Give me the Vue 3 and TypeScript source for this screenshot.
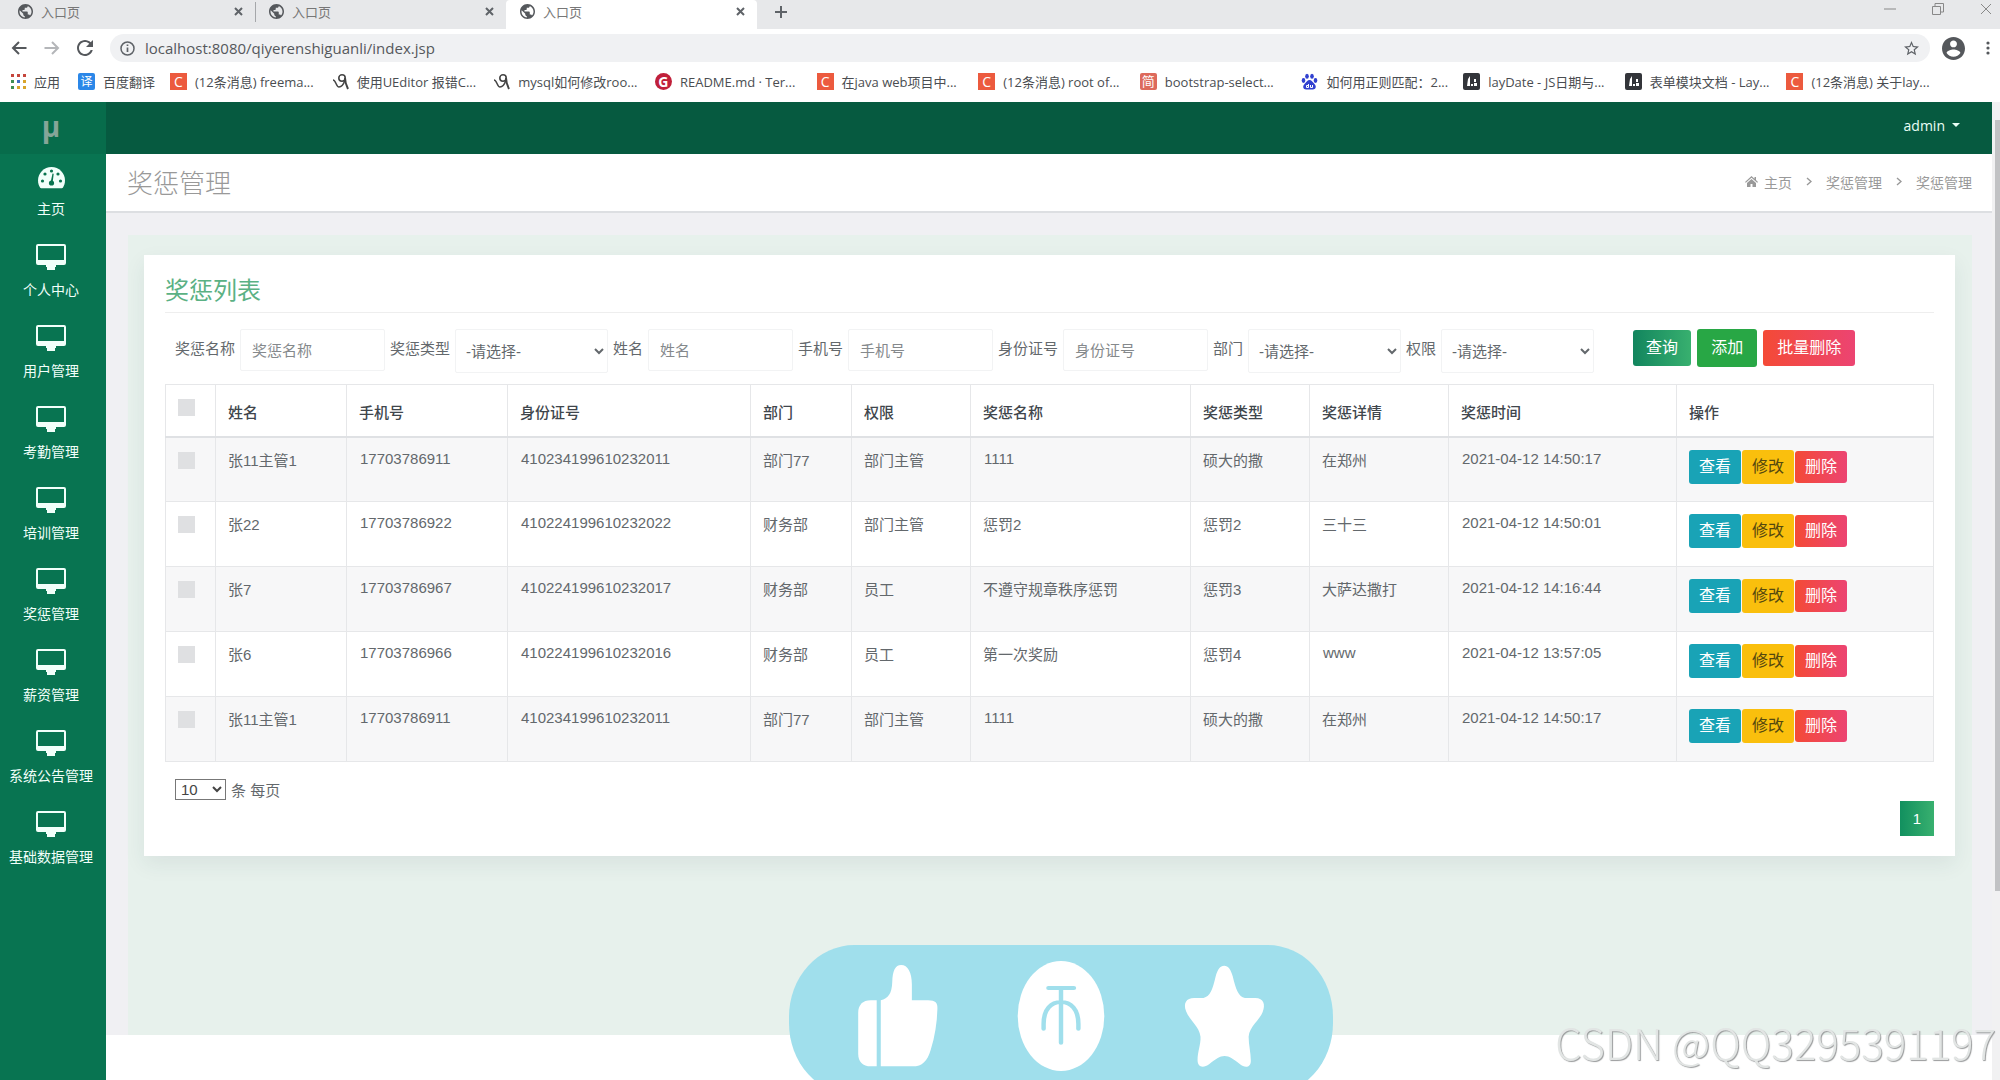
<script setup lang="ts">
import { ref } from 'vue'

interface Bookmark { kind: string; glyph: string; text: string }
interface Row {
  name: string; phone: string; idNo: string; dept: string; role: string
  title: string; type: string; detail: string; time: string
}

const tabs = [{ active: false }, { active: false }, { active: true }]

const bookmarks: Bookmark[] = [
  { kind: 'csdn', glyph: 'C', text: '(12条消息) freema...' },
  { kind: 'pen', glyph: '', text: '使用UEditor 报错C...' },
  { kind: 'pen', glyph: '', text: 'mysql如何修改roo...' },
  { kind: 'gitee', glyph: 'G', text: 'README.md · Ter...' },
  { kind: 'csdn', glyph: 'C', text: '在java web项目中...' },
  { kind: 'csdn', glyph: 'C', text: '(12条消息) root of...' },
  { kind: 'jian', glyph: '简', text: 'bootstrap-select...' },
  { kind: 'paw', glyph: '', text: '如何用正则匹配：2...' },
  { kind: 'lay', glyph: '', text: 'layDate - JS日期与...' },
  { kind: 'lay', glyph: '', text: '表单模块文档 - Lay...' },
  { kind: 'csdn', glyph: 'C', text: '(12条消息) 关于lay...' },
]

const appColors = ['#c5463c', '#c5463c', '#c5463c', '#3f8f52', '#3f6fc4', '#d9a52b', '#3f8f52', '#d9a52b', '#d9a52b']

const menu = ['主页', '个人中心', '用户管理', '考勤管理', '培训管理', '奖惩管理', '薪资管理', '系统公告管理', '基础数据管理']

const columns: { key: keyof Row | 'actions'; label: string; width: number }[] = [
  { key: 'name', label: '姓名', width: 131 },
  { key: 'phone', label: '手机号', width: 161 },
  { key: 'idNo', label: '身份证号', width: 243 },
  { key: 'dept', label: '部门', width: 101 },
  { key: 'role', label: '权限', width: 119 },
  { key: 'title', label: '奖惩名称', width: 220 },
  { key: 'type', label: '奖惩类型', width: 119 },
  { key: 'detail', label: '奖惩详情', width: 139 },
  { key: 'time', label: '奖惩时间', width: 228 },
  { key: 'actions', label: '操作', width: 257 },
]
const fields = columns.map(c => c.key).filter((k): k is keyof Row => k !== 'actions')

// Cells without Chinese characters sit on a slightly higher baseline.
const isLatin = (text: string) => /^[\x20-\x7e]+$/.test(text)

const filters = [
  { id: 'f-title', label: '奖惩名称', select: false },
  { id: 'f-type', label: '奖惩类型', select: true },
  { id: 'f-name', label: '姓名', select: false },
  { id: 'f-phone', label: '手机号', select: false },
  { id: 'f-idno', label: '身份证号', select: false },
  { id: 'f-dept', label: '部门', select: true },
  { id: 'f-role', label: '权限', select: true },
]

const rows: Row[] = [
  { name: '张11主管1', phone: '17703786911', idNo: '410234199610232011', dept: '部门77', role: '部门主管', title: '1111', type: '硕大的撒', detail: '在郑州', time: '2021-04-12 14:50:17' },
  { name: '张22', phone: '17703786922', idNo: '410224199610232022', dept: '财务部', role: '部门主管', title: '惩罚2', type: '惩罚2', detail: '三十三', time: '2021-04-12 14:50:01' },
  { name: '张7', phone: '17703786967', idNo: '410224199610232017', dept: '财务部', role: '员工', title: '不遵守规章秩序惩罚', type: '惩罚3', detail: '大萨达撒打', time: '2021-04-12 14:16:44' },
  { name: '张6', phone: '17703786966', idNo: '410224199610232016', dept: '财务部', role: '员工', title: '第一次奖励', type: '惩罚4', detail: 'www', time: '2021-04-12 13:57:05' },
  { name: '张11主管1', phone: '17703786911', idNo: '410234199610232011', dept: '部门77', role: '部门主管', title: '1111', type: '硕大的撒', detail: '在郑州', time: '2021-04-12 14:50:17' },
]

const url = ref('localhost:8080/qiyerenshiguanli/index.jsp')
const pageSize = ref('10')
</script>

<template>
  <div class="app">
    <header class="browser">
      <div class="tabstrip">
        <div v-for="(tab, i) in tabs" :key="i" class="tab" :class="{ active: tab.active, split: i === 0 }">
          <svg class="globe" viewBox="2 2 20 20" aria-hidden="true"><path d="M12 2C6.48 2 2 6.48 2 12s4.48 10 10 10 10-4.48 10-10S17.52 2 12 2zm-1 17.93c-3.95-.49-7-3.85-7-7.93 0-.62.08-1.21.21-1.79L9 15v1c0 1.1.9 2 2 2v1.93zm6.9-2.54c-.26-.81-1-1.39-1.9-1.39h-1v-3c0-.55-.45-1-1-1H8v-2h2c.55 0 1-.45 1-1V7h2c1.1 0 2-.9 2-2v-.41c2.93 1.19 5 4.06 5 7.41 0 2.08-.8 3.97-2.1 5.39z" /></svg>
          <span class="tab-title">入口页</span>
          <button class="bare" type="button" aria-label="关闭标签页">
            <svg width="9" height="9" viewBox="0 0 9 9"><path d="M1 1l7 7M8 1L1 8" stroke="#5f6368" stroke-width="2" /></svg>
          </button>
        </div>
        <button class="bare new-tab" type="button" aria-label="新标签页">
          <svg width="14" height="14" viewBox="0 0 14 14"><path d="M7 1v12M1 7h12" stroke="#5f6368" stroke-width="2" /></svg>
        </button>
        <div class="window-controls">
          <button class="bare" type="button" aria-label="最小化"><svg width="12" height="12" viewBox="0 0 12 12"><path d="M0 6h12" stroke="#888" /></svg></button>
          <button class="bare" type="button" aria-label="还原"><svg width="12" height="12" viewBox="0 0 12 12" fill="none" stroke="#888"><path d="M.5 3.500h8v8h-8zM3 3V.5h8.500V9H9" /></svg></button>
          <button class="bare" type="button" aria-label="关闭"><svg width="12" height="12" viewBox="0 0 12 12"><path d="M1 1l10 10M11 1L1 11" stroke="#888" /></svg></button>
        </div>
      </div>

      <div class="toolbar">
        <button class="bare" type="button" aria-label="后退"><svg width="16" height="14" viewBox="0 0 16 14" fill="none" stroke="#55585c" stroke-width="2"><path d="M15.500 7H2M8 1L2 7l6 6" /></svg></button>
        <button class="bare" type="button" aria-label="前进"><svg width="16" height="14" viewBox="0 0 16 14" fill="none" stroke="#b4b6b9" stroke-width="2"><path d="M.5 7H14M8 1l6 6-6 6" /></svg></button>
        <button class="bare" type="button" aria-label="重新加载"><svg width="16" height="16" viewBox="4 4 16 16"><path fill="#55585c" d="M17.650 6.350C16.200 4.900 14.210 4 12 4c-4.420 0-7.990 3.580-7.990 8s3.570 8 7.990 8c3.730 0 6.840-2.550 7.730-6h-2.080c-.82 2.330-3.040 4-5.650 4-3.310 0-6-2.690-6-6s2.690-6 6-6c1.660 0 3.140.69 4.220 1.780L13 11h7V4l-2.350 2.350z" /></svg></button>
        <div class="omnibox">
          <svg width="15" height="15" viewBox="0 0 15 15" aria-hidden="true"><circle cx="7.500" cy="7.500" r="6.500" fill="none" stroke="#5f6368" stroke-width="1.500" /><path d="M7.500 6.500V11M7.500 3.500V5" stroke="#5f6368" stroke-width="1.700" /></svg>
          <input v-model="url" type="text" aria-label="地址栏">
          <svg width="15" height="15" viewBox="2 2 20 20" aria-hidden="true"><path fill="#5f6368" d="M22 9.240l-7.190-.62L12 2 9.190 8.630 2 9.240l5.460 4.730L5.820 21 12 17.270 18.180 21l-1.630-7.030L22 9.240zM12 15.400l-3.760 2.270 1-4.280-3.320-2.880 4.380-.38L12 6.100l1.710 4.040 4.380.38-3.320 2.880 1 4.280L12 15.400z" /></svg>
        </div>
        <button class="bare" type="button" aria-label="账户"><svg width="23" height="23" viewBox="2 2 20 20"><path fill="#55585c" d="M12 2C6.480 2 2 6.480 2 12s4.480 10 10 10 10-4.480 10-10S17.520 2 12 2zm0 3c1.660 0 3 1.340 3 3s-1.340 3-3 3-3-1.340-3-3 1.340-3 3-3zm0 14.200c-2.500 0-4.710-1.280-6-3.220.03-1.990 4-3.080 6-3.080 1.990 0 5.970 1.090 6 3.080-1.290 1.940-3.500 3.220-6 3.220z" /></svg></button>
        <button class="bare dots" type="button" aria-label="菜单"><svg width="4" height="14" viewBox="0 0 4 14" fill="#55585c"><circle cx="2" cy="2" r="1.600" /><circle cx="2" cy="7" r="1.600" /><circle cx="2" cy="12" r="1.600" /></svg></button>
      </div>

      <nav class="bookmarks">
        <a class="apps" href="#">
          <svg width="15" height="15" viewBox="0 0 15 15" aria-hidden="true"><rect v-for="(c, i) in appColors" :key="i" :x="(i % 3) * 6" :y="Math.floor(i / 3) * 6" width="3" height="3" :fill="c" /></svg>
          应用
        </a>
        <a class="translate" href="#"><span class="favicon blue">译</span>百度翻译</a>
        <a v-for="(b, i) in bookmarks" :key="i" class="bookmark" href="#">
          <svg v-if="b.kind === 'pen'" class="favicon" viewBox="0 0 17 17" fill="none" stroke="#444" aria-hidden="true"><path stroke-width="1.500" d="M1 7c3 0 3 7 6 7 3 0 5-4 6-7" /><circle cx="10" cy="5" r="3.200" stroke-width="1.600" /><path stroke-width="2" d="M13 5c0 4 1 7 3 11" /></svg>
          <svg v-else-if="b.kind === 'paw'" class="favicon" viewBox="0 0 17 17" fill="#3140d0" aria-hidden="true"><ellipse cx="2.500" cy="7.500" rx="1.800" ry="2.400" /><ellipse cx="6" cy="3.300" rx="1.800" ry="2.500" /><ellipse cx="11" cy="3.300" rx="1.800" ry="2.500" /><ellipse cx="14.500" cy="7.500" rx="1.800" ry="2.400" /><path d="M8.500 7c2 0 3 2 5 4 2.500 2.500 1 5.500-1.500 5.500H5C2.500 16.500 1 13.500 3.500 11c2-2 3-4 5-4z" /><path d="M7.500 11v3.500h-2v-2h2M9.500 12v2.500h2V12" fill="none" stroke="#fff" /></svg>
          <svg v-else-if="b.kind === 'lay'" class="favicon" viewBox="0 0 17 17" aria-hidden="true"><rect width="17" height="17" rx="2" fill="#33353a" /><path d="M4 13l1-7 2-3v10zM8 11h2v2H8zM11 6h2v3h-2zM11 10h3v3h-3z" fill="#fff" /></svg>
          <span v-else class="favicon" :class="b.kind">{{ b.glyph }}</span>
          <span>{{ b.text }}</span>
        </a>
      </nav>
    </header>

    <div class="page">
      <aside class="sidebar">
        <div class="brand">μ</div>
        <nav>
          <a v-for="(item, i) in menu" :key="item" href="#" class="menu-item">
            <svg v-if="i === 0" width="27" height="26" viewBox="0 0 27 26" aria-hidden="true">
              <path fill="#f1fffa" d="M13.500 4C6 4 0 10 0 17.500c0 2.700.8 5.200 2.100 7.200.3.300.7.500 1.100.5h20.600c.4 0 .8-.2 1.100-.5 1.300-2 2.100-4.500 2.100-7.200C27 10 21 4 13.500 4z" />
              <g fill="#08744f"><circle cx="4.500" cy="18" r="1.600" /><circle cx="7" cy="11" r="1.600" /><circle cx="13.500" cy="8" r="1.600" /><circle cx="20" cy="11" r="1.600" /><circle cx="22.500" cy="18" r="1.600" /><circle cx="13.500" cy="20" r="2.600" /><path d="M12.500 20l2-9.500 1.200.3-1.200 9.500z" /></g>
            </svg>
            <svg v-else width="30" height="26" viewBox="0 0 30 26" aria-hidden="true">
              <path fill="#f1fffa" fill-rule="evenodd" d="M2 0h26a2 2 0 0 1 2 2v17a2 2 0 0 1-2 2h-8v2h-1v3h-8v-3h-1v-2H2a2 2 0 0 1-2-2V2a2 2 0 0 1 2-2zm0 2v14h26V2z" />
            </svg>
            <span>{{ item }}</span>
          </a>
        </nav>
      </aside>

      <main class="main">
        <div class="topbar"><button class="bare user" type="button">admin<i class="caret"></i></button></div>
        <div class="title-bar">
          <h1>奖惩管理</h1>
          <nav class="crumbs" aria-label="面包屑">
            <a href="#"><svg width="13" height="11" viewBox="0 0 13 11" aria-hidden="true"><path fill="#999" d="M6.500 0L0 6l.8.800L6.500 1.800l5.700 5L13 6l-2-1.900V1H9.500v1.700zM2 7v4h3.500V8h2v3H11V7L6.500 3z" /></svg>主页</a>
            <svg width="6" height="9" viewBox="0 0 6 9" aria-hidden="true"><path d="M1 1l4 3.500L1 8" fill="none" stroke="#999" stroke-width="1.400" /></svg>
            <a href="#">奖惩管理</a>
            <svg width="6" height="9" viewBox="0 0 6 9" aria-hidden="true"><path d="M1 1l4 3.500L1 8" fill="none" stroke="#999" stroke-width="1.400" /></svg>
            <span>奖惩管理</span>
          </nav>
        </div>

        <div class="content">
          <div class="panel">
            <section class="card">
              <h2>奖惩列表</h2>
              <form class="filters" @submit.prevent>
                <template v-for="f in filters" :key="f.id">
                  <label :for="f.id">{{ f.label }}</label>
                  <select v-if="f.select" :id="f.id"><option>-请选择-</option></select>
                  <input v-else :id="f.id" type="text" :placeholder="f.label">
                </template>
                <div class="actions">
                  <button type="submit" class="btn search">查询</button>
                  <button type="button" class="btn add">添加</button>
                  <button type="button" class="btn danger">批量删除</button>
                </div>
              </form>

              <table>
                <colgroup>
                  <col style="width: 50px">
                  <col v-for="c in columns" :key="c.key" :style="{ width: c.width + 'px' }">
                </colgroup>
                <thead>
                  <tr>
                    <th class="check"><input type="checkbox" aria-label="全选"></th>
                    <th v-for="c in columns" :key="c.key" scope="col">{{ c.label }}</th>
                  </tr>
                </thead>
                <tbody>
                  <tr v-for="(r, i) in rows" :key="i">
                    <td class="check"><input type="checkbox" :aria-label="r.name"></td>
                    <td v-for="k in fields" :key="k" :class="{ latin: isLatin(r[k]) }">{{ r[k] }}</td>
                    <td>
                      <div class="row-actions">
                        <button type="button" class="btn view">查看</button>
                        <button type="button" class="btn edit">修改</button>
                        <button type="button" class="btn danger">删除</button>
                      </div>
                    </td>
                  </tr>
                </tbody>
              </table>

              <div class="page-size">
                <select id="page-size" v-model="pageSize"><option>10</option><option>25</option><option>50</option></select>
                <label for="page-size">条 每页</label>
              </div>
              <div class="pager"><button type="button">1</button></div>
            </section>
          </div>
        </div>
      </main>

      <div class="scrollbar" aria-hidden="true">
        <i class="arrow"></i>
        <i class="thumb"></i>
        <i class="rest"></i>
      </div>
    </div>

    <svg class="reaction" viewBox="25 45 1470 450" preserveAspectRatio="none" aria-hidden="true">
      <rect x="25" y="45" width="1470" height="450" rx="176" ry="215" fill="#a0dfec" />
      <g fill="#fff">
        <path d="M262 211h-16c-22 0-34 14-34 38v122c0 24 12 38 34 38h16z" />
        <path d="M273 211c20-6 30-20 31-55 1-34 8-51 24-51 18 0 29 22 29 58v48h44c20 0 26 8 25 26-1 42-7 84-18 122-9 34-23 50-49 50h-86z" />
        <ellipse cx="760" cy="258" rx="117" ry="165" />
        <path d="M1201 107c11 0 18 12 23 32 8 38 16 62 33 65h28c23 0 28 20 20 42-8 24-36 44-38 74 0 24 6 48 6 72 0 20-15 24-30 10-16-14-28-24-41-24s-25 10-41 24c-17 14-32 10-32-12 0-26 9-46 8-70-3-30-30-50-39-76-8-24 0-40 22-40h25c19-4 25-27 33-65 5-20 12-32 23-32z" />
      </g>
      <g fill="none" stroke="#a0dfec" stroke-width="12" stroke-linecap="round">
        <path d="M726 174h69M760 174v164M713 296v-14c0-44 20-66 47-66s47 22 47 66v14" />
      </g>
    </svg>
    <div class="watermark">CSDN @QQ3295391197</div>
  </div>
</template>

<style>
body {
  margin: 0;
  background: #fff;
}
</style>

<style scoped>
.app {
  position: relative;
  display: flex;
  flex-direction: column;
  min-height: 100vh;
  font-family: "Liberation Sans", "Noto Sans CJK SC", sans-serif;
  font-size: 15px;
  color: #63686c;
}
.app *,
.app *::before {
  box-sizing: border-box;
}
a {
  color: inherit;
  text-decoration: none;
}
button,
input,
select {
  font: inherit;
  color: inherit;
}
.bare {
  display: flex;
  align-items: center;
  padding: 0;
  border: 0;
  background: none;
}

/* Browser frame */
.browser {
  font-family: "Open Sans", "Noto Sans CJK SC", sans-serif;
  font-size: 13px;
  color: #4a4d51;
}
.tabstrip {
  display: flex;
  height: 29px;
  background: #e7e8ea;
}
.tab {
  position: relative;
  display: flex;
  align-items: center;
  width: 251px;
  height: 23px;
  padding: 0 8px 0 18px;
  color: #777;
}
.tab.split::before {
  content: "";
  position: absolute;
  right: -5px;
  top: 2px;
  width: 1px;
  height: 20px;
  background: #a5a7aa;
}
.tab.active {
  height: 29px;
  margin-left: 4px;
  padding: 0 12px 6px 14px;
  border-radius: 4px 4px 0 0;
  background: #fff;
}
.globe {
  width: 15px;
  height: 15px;
  fill: #55585c;
}
.tab-title {
  flex: 1;
  margin-left: 8px;
}
.new-tab {
  height: 23px;
  margin-left: 17px;
}
.window-controls {
  display: flex;
  gap: 36px;
  height: 18px;
  margin-left: auto;
  padding-right: 8px;
}
.toolbar {
  display: flex;
  align-items: center;
  gap: 17px;
  height: 38px;
  padding: 0 10px 0 11px;
}
.omnibox {
  flex: 1;
  display: flex;
  align-items: center;
  gap: 8px;
  height: 28px;
  margin-right: -5px;
  padding: 0 11px 0 10px;
  border-radius: 14px;
  background: #f0f1f3;
}
.omnibox input {
  flex: 1;
  padding: 0 2px;
  border: 0;
  outline: 0;
  background: none;
  font-size: 15px;
  color: #55585c;
}
.dots {
  margin-left: 4px;
}
.bookmarks {
  display: flex;
  align-items: center;
  height: 35px;
  padding: 0 52px 6px 11px;
  white-space: nowrap;
}
.bookmarks a {
  display: flex;
  align-items: center;
  gap: 8px;
}
.apps {
  width: 67px;
}
.translate {
  width: 92px;
}
.bookmark {
  flex: 1 1 0;
  min-width: 0;
}
.favicon {
  flex: none;
  width: 17px;
  height: 17px;
  font-size: 14px;
  line-height: 17px;
  text-align: center;
  color: #fff;
}
.blue {
  border-radius: 2px;
  background: #2b87e8;
  font-size: 12px;
}
.csdn {
  background: #ec5a3e;
}
.gitee {
  border-radius: 50%;
  background: #c0203a;
  font-weight: 700;
}
.jian {
  border-radius: 2px;
  background: #dd6a5c;
  font-size: 13px;
}

/* Application */
.page {
  flex: 1;
  display: flex;
}
.sidebar {
  width: 106px;
  background: #087451;
  color: #f1fffa;
}
.brand {
  height: 52px;
  padding-right: 4px;
  background: #076c4b;
  font-family: "Open Sans", sans-serif;
  font-size: 28px;
  font-weight: 700;
  line-height: 48px;
  text-align: center;
  color: #85a598;
}
.menu-item {
  display: flex;
  flex-direction: column;
  align-items: center;
  gap: 10px;
  height: 81px;
  padding: 9px 4px 0 0;
  font-size: 14px;
  line-height: 20px;
  white-space: nowrap;
}
.menu-item svg {
  flex: none;
}
.main {
  flex: 1;
  min-width: 0;
}
.topbar {
  display: flex;
  justify-content: flex-end;
  height: 52px;
  padding: 0 32px 6px 0;
  background: #065a40;
}
.user {
  gap: 7px;
  font-family: "Open Sans", sans-serif;
  font-size: 14px;
  color: #e9fff6;
}
.caret {
  border: 4px solid transparent;
  border-top-color: #e9fff6;
  border-bottom: 0;
}
.title-bar {
  display: flex;
  align-items: center;
  justify-content: space-between;
  height: 59px;
  padding: 0 20px 2px 21px;
  border-bottom: 2px solid #dddfe2;
}
h1 {
  margin: 0;
  font-size: 26px;
  font-weight: 300;
  color: #999;
}
.crumbs {
  display: flex;
  align-items: center;
  gap: 14px;
  font-size: 14px;
  color: #999;
}
.crumbs a {
  display: flex;
  align-items: center;
  gap: 6px;
}
.content {
  padding: 22px 20px 0 22px;
  background: #f0f0f3;
}
.panel {
  min-height: 800px;
  padding: 20px 17px 21px 16px;
  background: #e7f1ec;
}
.card {
  padding: 20px 21px 20px;
  background: #fff;
  box-shadow: 0 8px 20px rgba(40, 70, 80, 0.08);
}
h2 {
  margin: 0;
  padding-bottom: 5px;
  border-bottom: 1px solid #eee;
  font-size: 24px;
  font-weight: 400;
  line-height: 32px;
  color: #5bb184;
}
.filters {
  display: flex;
  flex-wrap: wrap;
  gap: 5px;
  min-height: 44px;
  padding-left: 10px;
  margin: 16px 0 11px;
}
.filters label {
  line-height: 40px;
}
.filters input,
.filters select {
  height: 42px;
  border: 1px solid #f2f3f4;
  border-radius: 2px;
  background: #fff;
}
.filters input {
  width: 145px;
  padding: 0 11px;
}
.filters input::placeholder {
  color: #85898c;
}
.filters select {
  width: 153px;
  height: 44px;
  padding-left: 6px;
}
.actions {
  display: flex;
  align-items: center;
  gap: 6px;
  height: 38px;
  margin-left: 34px;
}
.btn {
  height: 36px;
  padding: 0 13px;
  border: 0;
  border-radius: 3px;
  font-size: 16px;
  line-height: 24px;
  color: #fff;
}
.search {
  background: linear-gradient(90deg, #12855e, #38b06f);
}
.add {
  height: 38px;
  padding: 0 14px;
  background: #28a745;
}
.danger {
  padding: 0 14px;
  background: linear-gradient(90deg, #f44a36, #ec4472);
}
table {
  width: 100%;
  border-collapse: collapse;
  table-layout: fixed;
}
th,
td {
  padding: 12px 12px 0;
  border: 1px solid #e6e7e9;
  line-height: 22px;
  text-align: left;
  vertical-align: top;
  white-space: nowrap;
}
th {
  height: 52px;
  padding-top: 17px;
  border-bottom: 2px solid #dfe1e4;
  font-weight: 500;
  color: #40464c;
}
td {
  height: 65px;
}
td.latin {
  padding-top: 10px;
  padding-left: 13px;
}
tbody tr:nth-child(odd) {
  background: #f7f7f8;
}
.check {
  padding-top: 14px;
}
.check input {
  display: block;
  appearance: none;
  width: 17px;
  height: 17px;
  margin: 0;
  background: #dfe0e2;
}
.row-actions {
  display: flex;
  align-items: center;
  gap: 1px;
}
.row-actions .btn {
  height: 34px;
  padding: 0 10px;
}
.row-actions .danger {
  height: 32px;
}
.view {
  background: #19a3b6;
}
.edit {
  background: #fabf0d;
  color: #54480f;
}
.page-size {
  display: flex;
  align-items: center;
  gap: 5px;
  margin-top: 17px;
  padding-left: 10px;
}
.page-size select {
  width: 51px;
  height: 21px;
  padding: 0 0 0 1px;
  border: 1px solid #777;
  background: #fff;
  color: #444;
}
.pager {
  display: flex;
  justify-content: flex-end;
  margin-top: 1px;
}
.pager button {
  width: 34px;
  height: 35px;
  padding: 0;
  border: 0;
  background: linear-gradient(90deg, #12905f, #38b06f);
  color: #fff;
}
.scrollbar {
  display: flex;
  flex-direction: column;
  width: 8px;
  padding-left: 3px;
  background: #f1f1f2;
}
.arrow {
  height: 18px;
}
.thumb {
  flex: 771;
  background: #c1c2c4;
}
.rest {
  flex: 189;
}

/* Floating overlays */
.reaction {
  position: fixed;
  left: 789px;
  bottom: -15px;
  width: 544px;
  height: 150px;
}
.watermark {
  position: fixed;
  right: 4px;
  bottom: 16px;
  font-family: "Noto Sans CJK SC", sans-serif;
  font-size: 42px;
  font-weight: 300;
  line-height: 44px;
  white-space: nowrap;
  color: #e2e5e4;
  text-shadow: 1px 1px 1px #999b9c;
}
</style>
